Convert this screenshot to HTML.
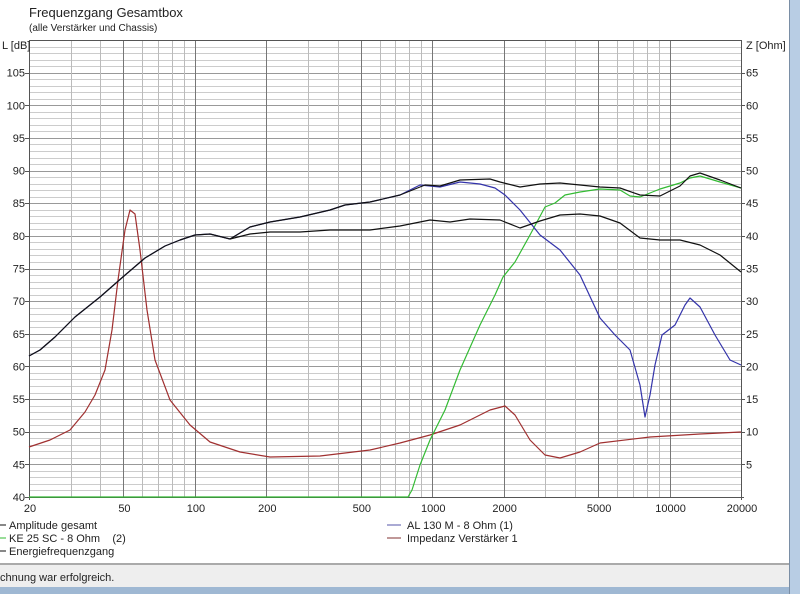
<!DOCTYPE html>
<html><head><meta charset="utf-8"><style>
html,body{margin:0;padding:0;background:#fff;width:800px;height:594px;overflow:hidden;font-family:"Liberation Sans",Arial,sans-serif}
svg{position:absolute;left:0;top:0}
</style></head><body>
<svg id="s" width="800" height="594" xmlns="http://www.w3.org/2000/svg" font-family="Liberation Sans, Arial, sans-serif">
<rect x="0" y="0" width="800" height="594" fill="#fff"/>
<g id="grid"></g>
<text x="29" y="17" font-size="13" fill="#222">Frequenzgang Gesamtbox</text>
<text x="29" y="31" font-size="10" fill="#222">(alle Verstärker und Chassis)</text>
<text x="2" y="49" font-size="11" fill="#222">L [dB]</text>
<text x="746" y="49" font-size="11" fill="#222">Z [Ohm]</text>
<g id="lab" font-size="11" fill="#222"></g>
<g fill="none" stroke-width="1.2" stroke-linejoin="round">
<polyline stroke="#a03030" points="29,447 50,440 70,430 85,412 95,395 105,370 112,330 118,280 125,230 130,210 135,214 140,250 147,310 155,360 170,400 190,425 210,442 240,452 270,457 320,456 370,450 400,443 430,435 460,425 490,410 505,406 515,415 530,440 545,455 560,458 580,452 600,443 650,437 700,434 741,432"/>
<polyline stroke="#33bb33" points="29,497 408,497 412,490 420,465 430,440 445,410 460,370 480,325 495,295 503,277 515,262 530,235 545,207 555,203 565,195 580,192 600,189 620,190 630,196 640,197 650,193 660,189 680,183 690,178 700,176 720,182 741,188"/>
<polyline stroke="#3333aa" points="29,356 40,350 55,337 75,317 100,297 124,276 145,258 165,246 180,240 195,235 210,234 230,239 250,227 270,222 300,217 330,210 345,205 370,202 400,195 420,185 440,187 460,182 480,184 495,188 505,195 520,210 540,235 560,250 580,275 600,318 615,335 630,350 640,385 645,417 650,395 655,365 662,335 675,325 685,305 690,298 700,307 715,335 730,360 741,365"/>
<polyline stroke="#111" points="29,356 40,350 55,337 75,317 100,297 124,276 145,258 165,246 180,240 195,235 210,234 230,239 250,227 270,222 300,217 330,210 345,205 370,202 400,195 425,185 440,186 460,180 490,179 500,182 520,187 540,184 560,183 600,187 620,188 640,195 660,196 680,186 690,176 700,173 720,180 741,188"/>
<polyline stroke="#111" points="230,239 250,234 270,232 300,232 330,230 370,230 400,226 430,220 450,222 470,219 500,220 520,228 540,221 560,215 580,214 600,216 620,223 640,238 660,240 680,240 700,245 720,255 741,272"/>
</g>
<g font-size="11" fill="#222">
<line x1="0" y1="525" x2="6" y2="525" stroke="#111"/><text x="9" y="529">Amplitude gesamt</text>
<line x1="0" y1="538" x2="6" y2="538" stroke="#33bb33"/><text x="9" y="542">KE 25 SC - 8 Ohm &#160;&#160;&#160;(2)</text>
<line x1="0" y1="551" x2="6" y2="551" stroke="#111"/><text x="9" y="555">Energiefrequenzgang</text>
<line x1="387" y1="525" x2="401" y2="525" stroke="#5555aa"/><text x="407" y="529">AL 130 M - 8 Ohm (1)</text>
<line x1="387" y1="538" x2="401" y2="538" stroke="#803030"/><text x="407" y="542">Impedanz Verstärker 1</text>
</g>
<rect x="0" y="563" width="790" height="2" fill="#aaa"/>
<rect x="0" y="565" width="790" height="23" fill="#eeeeee"/>
<text x="0" y="581" font-size="11" fill="#222">chnung war erfolgreich.</text>
<rect x="0" y="587" width="800" height="7" fill="#9fb8d3"/>
<rect x="789" y="0" width="11" height="594" fill="#b8cde4"/>
<rect x="789" y="0" width="1" height="594" fill="#7a8ea5"/>
</svg>
<script>
var g=document.getElementById('grid'),L=document.getElementById('lab'),ns='http://www.w3.org/2000/svg';
function ln(x1,y1,x2,y2,c){var l=document.createElementNS(ns,'line');l.setAttribute('x1',x1);l.setAttribute('y1',y1);l.setAttribute('x2',x2);l.setAttribute('y2',y2);l.setAttribute('stroke',c);l.setAttribute('stroke-width',1);g.appendChild(l);}
function tx(x,y,t,a){var e=document.createElementNS(ns,'text');e.setAttribute('x',x);e.setAttribute('y',y);if(a)e.setAttribute('text-anchor',a);e.textContent=t;L.appendChild(e);}
var X0=29,X1=741,Y0=40,Y1=497,K=(X1-X0)/3;
function fx(f){return X0+K*Math.log10(f/20);}
for(var d=40;d<=110;d++){var y=Math.round(Y1-(d-40)*(Y1-Y0)/70)+.5;ln(X0,y,X1,y,d%5==0?'#999':'#ccc');}
var fs=[];[10,100,1000,10000].forEach(function(m){for(var i=1;i<10;i++){var f=i*m;if(f>=20&&f<=20000)fs.push(f);}});
var maj=[50,100,200,500,1000,2000,5000,10000];
fs.forEach(function(f){var x=Math.round(fx(f))+.5;ln(x,Y0,x,Y1,maj.indexOf(f)>=0?'#777':'#bbb');});
ln(X0+.5,Y0,X0+.5,Y1+3,'#555');ln(X1+.5,Y0,X1+.5,Y1+3,'#555');ln(X0,Y0+.5,X1,Y0+.5,'#555');ln(X0-3,Y1+.5,X1+3,Y1+.5,'#555');
for(var d=40;d<=105;d+=5){var y=Y1-(d-40)*(Y1-Y0)/70;tx(25,y+4,d,'end');ln(X0-4,Math.round(y)+.5,X0,Math.round(y)+.5,'#555');if(d>40){tx(746,y+4,d-40);ln(X1,Math.round(y)+.5,X1+4,Math.round(y)+.5,'#555');}}
[20,50,100,200,500,1000,2000,5000,10000,20000].forEach(function(f){tx(fx(f)+1,512,f,'middle');});
</script>
</body></html>
